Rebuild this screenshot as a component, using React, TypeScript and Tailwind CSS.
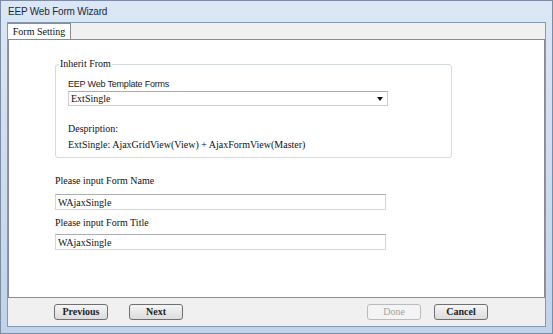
const serif = "font-['Liberation_Serif','Times_New_Roman',serif]";

const Btn = ({ label, disabled, className = '' }: { label: string; disabled?: boolean; className?: string }) => (
  <button
    className={`h-[16px] w-[54px] rounded-[3px] border text-[10px] leading-none ${serif} ${className} ${
      disabled
        ? 'border-[#b8bcc0] bg-[#f4f4f4] text-[#a3a3a3]'
        : 'border-[#707070] bg-gradient-to-b from-[#f5f5f5] to-[#dcdcdc] font-bold text-[#222]'
    }`}
  >
    {label}
  </button>
);

const App = () => {
  return (
    <div className="flex h-[334px] w-[553px] flex-col border border-[#7d8ca2] bg-gradient-to-b from-[#dbe7f5] to-[#bfd3ea]">
      {/* title bar */}
      <div className="flex h-[21px] items-center pl-[7px] font-['Liberation_Sans',Arial,sans-serif] text-[10px] tracking-[-0.2px] text-[#1e2a3a]">
        EEP Web Form Wizard
      </div>

      <div className="mx-[6px] mb-[6px] flex flex-1 flex-col border border-[#8598b0] bg-[#f0f0f0]">
        {/* tab strip */}
        <div className="flex h-[16px] items-end">
          <div className={`flex h-[16px] w-[63px] items-center justify-center border-r border-t border-[#898c95] bg-white text-[10px] ${serif} text-[#111]`}>
            Form Setting
          </div>
        </div>

        {/* content panel */}
        <div className="flex h-[259px] flex-col border border-[#898c95] bg-white pl-[46px] pt-[24px]">
          <div className="relative h-[94px] w-[397px] rounded-[3px] border border-[#d5dadf] pl-[12px] pt-[14px]">
            <div className={`absolute -top-[7px] left-[3px] bg-white px-[1px] text-[10px] leading-[12px] ${serif} text-[#111]`}>
              Inherit From
            </div>
            <div className="font-['Liberation_Sans',Arial,sans-serif] text-[9px] leading-[11px] tracking-[-0.2px] text-[#222]">
              EEP Web Template Forms
            </div>
            <div className={`mt-[1px] flex h-[15px] w-[320px] items-center justify-between border border-[#c9ccd2] border-t-[#abadb3] pl-[2px] pr-[4px] text-[10px] ${serif} text-[#111]`}>
              <span>ExtSingle</span>
              <span className="h-0 w-0 border-l-[3px] border-r-[3px] border-t-[4px] border-l-transparent border-r-transparent border-t-[#111]" />
            </div>
            <div className={`mt-[17px] text-[10px] leading-[12px] ${serif} text-[#111]`}>Despription:</div>
            <div className={`mt-[4px] text-[10px] leading-[12px] ${serif} text-[#111]`}>
              ExtSingle: AjaxGridView(View) + AjaxFormView(Master)
            </div>
          </div>

          <div className={`mt-[17px] text-[10px] leading-[12px] ${serif} text-[#111]`}>Please input Form Name</div>
          <div className={`mt-[7px] flex h-[16px] w-[331px] items-center border border-[#d3d6db] border-t-[#abadb3] pl-[2px] text-[10px] ${serif} text-[#111]`}>
            WAjaxSingle
          </div>
          <div className={`mt-[7px] text-[10px] leading-[12px] ${serif} text-[#111]`}>Please input Form Title</div>
          <div className={`mt-[5px] flex h-[16px] w-[331px] items-center border border-[#d3d6db] border-t-[#abadb3] pl-[2px] text-[10px] ${serif} text-[#111]`}>
            WAjaxSingle
          </div>
        </div>

        {/* button row */}
        <div className="flex flex-1 items-center pl-[46px] pr-[57px]">
          <Btn label="Previous" />
          <Btn label="Next" className="ml-[21px]" />
          <div className="flex-1" />
          <Btn label="Done" disabled />
          <Btn label="Cancel" className="ml-[13px]" />
        </div>
      </div>
    </div>
  );
};

export default App;
